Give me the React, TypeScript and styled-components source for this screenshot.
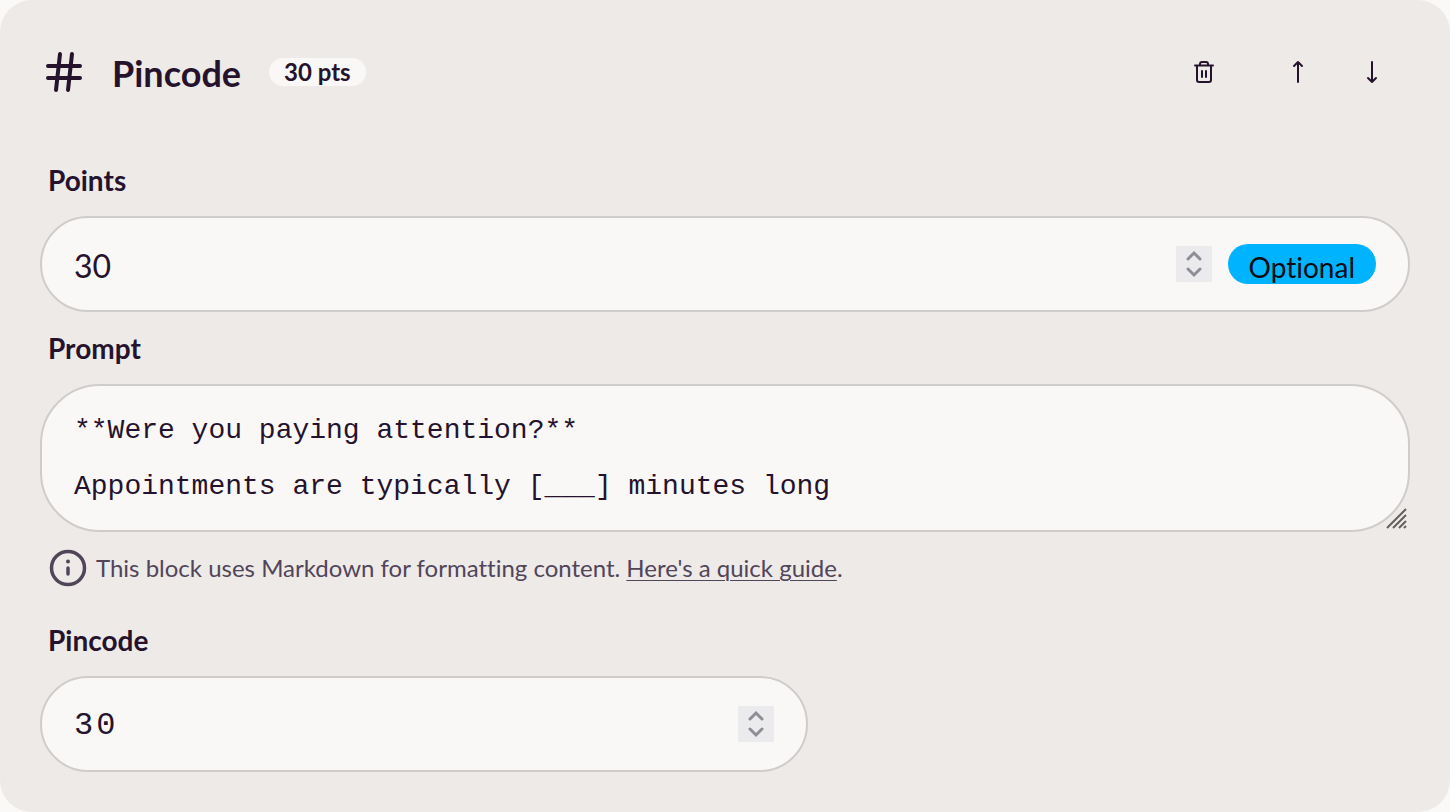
import React, { useState } from "react";
import styled, { createGlobalStyle } from "styled-components";

const ink = "#25132e";
const sans = 'Lato, "Noto Sans", sans-serif';
const mono = '"Liberation Mono", "Courier New", monospace';

const GlobalStyle = createGlobalStyle`
  *, *::before, *::after { box-sizing: border-box; }
  body {
    margin: 0;
    background: #faf9f7;
    color: ${ink};
    font-family: ${sans};
    font-variant-ligatures: none;
  }
  button, input, textarea { font: inherit; color: inherit; }
`;

const Card = styled.section`
  padding: 40px;
  border-radius: 32px;
  background: #eeeae7;
`;

const Header = styled.header`
  display: flex;
  align-items: center;
  height: 64px;
  margin-bottom: 40px;
`;

const HashIcon = styled.svg`
  flex: none;
  width: 48px;
  height: 48px;
  margin-right: 24px;
`;

const Title = styled.h2`
  margin: 0 28px 0 0;
  padding-top: 2px;
  font-size: 36px;
  font-weight: 700;
  line-height: 48px;
`;

const PointsBadge = styled.span`
  padding: 0 15px;
  border-radius: 14px;
  background: #faf8f7;
  font-size: 24px;
  font-weight: 700;
  line-height: 28px;
`;

const Actions = styled.div`
  display: flex;
  align-items: center;
  margin-left: auto;
  padding-right: 10px;
`;

const IconButton = styled.button<{ $gap?: number }>`
  display: flex;
  align-items: center;
  justify-content: center;
  width: 56px;
  height: 56px;
  margin: 0 0 0 ${(p) => p.$gap ?? 0}px;
  padding: 0;
  border: 0;
  border-radius: 28px;
  background: transparent;
  cursor: pointer;
`;

const Label = styled.label`
  display: block;
  padding: 16px 8px;
  font-size: 28px;
  font-weight: 700;
  line-height: 40px;
`;

const Field = styled.div<{ $narrow?: boolean }>`
  display: flex;
  align-items: center;
  gap: 16px;
  height: 96px;
  max-width: ${(p) => (p.$narrow ? "768px" : "none")};
  padding: 0 32px;
  border: 2px solid #d0cccb;
  border-radius: 48px;
  background: #faf8f7;
`;

const NumberInput = styled.input<{ $code?: boolean }>`
  flex: 1;
  min-width: 0;
  height: 52px;
  padding: 2px 0 0;
  border: 0;
  outline: 0;
  background: transparent;
  font-family: ${(p) => (p.$code ? mono : sans)};
  font-size: 32px;
  letter-spacing: ${(p) => (p.$code ? "3px" : "normal")};
  line-height: 48px;
  appearance: textfield;
  &::-webkit-inner-spin-button { display: none; }
`;

const Spinner = styled.div`
  display: flex;
  flex-direction: column;
  width: 36px;
  height: 36px;
  background: #ebebee;
`;

const Step = styled.button`
  display: flex;
  flex: 1;
  align-items: center;
  justify-content: center;
  padding: 0;
  border: 0;
  background: transparent;
`;

const OptionalTag = styled.span`
  height: 40px;
  padding: 0 21px;
  border-radius: 20px;
  background: #00b3ff;
  color: #0b0b12;
  font-size: 28px;
  line-height: 46px;
`;

const PromptBox = styled.div`
  position: relative;
  display: flex;
`;

const PromptArea = styled.textarea`
  width: 100%;
  height: 148px;
  padding: 31px 32px 29px;
  border: 2px solid #d0cccb;
  border-radius: 60px;
  outline: 0;
  background: #faf8f7;
  font-family: ${mono};
  font-size: 28px;
  line-height: 28px;
  resize: none;
  overflow: hidden;
`;

const Grip = styled.svg`
  position: absolute;
  right: 2px;
  bottom: 2px;
  width: 22px;
  height: 22px;
  pointer-events: none;
`;

const Help = styled.p`
  display: flex;
  align-items: center;
  gap: 8px;
  margin: 16px 0;
  padding: 0 8px;
  color: #51455a;
  font-size: 24px;
  line-height: 40px;
`;

const HelpLink = styled.a`
  color: inherit;
  text-decoration: underline;
  text-decoration-thickness: 1px;
  text-underline-offset: 3px;
`;

function Stepper({ onStep }: { onStep: (by: number) => void }) {
  return (
    <Spinner>
      <Step type="button" aria-label="Increase" onClick={() => onStep(1)}>
        <svg width="16" height="18" viewBox="0 0 16 18" fill="none" stroke="#8f8d96" strokeWidth="3">
          <path d="M2 13 8 7l6 6" strokeLinecap="round" />
        </svg>
      </Step>
      <Step type="button" aria-label="Decrease" onClick={() => onStep(-1)}>
        <svg width="16" height="18" viewBox="0 0 16 18" fill="none" stroke="#8f8d96" strokeWidth="3">
          <path d="M2 5l6 6 6-6" strokeLinecap="round" />
        </svg>
      </Step>
    </Spinner>
  );
}

export default function App() {
  const [points, setPoints] = useState("30");
  const [pin, setPin] = useState("30");
  const [prompt, setPrompt] = useState(
    "**Were you paying attention?**\n\nAppointments are typically [___] minutes long",
  );
  const bump = (value: string, by: number) => String((Number(value) || 0) + by);

  return (
    <>
      <GlobalStyle />
      <Card>
        <Header>
          <HashIcon viewBox="0 0 48 48" fill="none" stroke={ink} strokeWidth="4" strokeLinecap="round" aria-hidden>
            <path d="M8 18h32M8 30h32M20 6l-4 36M32 6l-4 36" />
          </HashIcon>
          <Title>Pincode</Title>
          <PointsBadge>{points} pts</PointsBadge>
          <Actions>
            <IconButton type="button" aria-label="Delete block">
              <svg width="24" height="24" viewBox="0 0 24 24" fill="none" stroke={ink} strokeWidth="2" strokeLinecap="round" strokeLinejoin="round">
                <path d="M3 5.500h18M5 5.500V20a2 2 0 0 0 2 2h10a2 2 0 0 0 2-2V5.500M8 5V4a2 2 0 0 1 2-2h4a2 2 0 0 1 2 2v1M10 11v6M14 11v6" />
              </svg>
            </IconButton>
            <IconButton type="button" aria-label="Move up" $gap={38}>
              <svg width="24" height="24" viewBox="0 0 24 24" fill="none" stroke={ink} strokeWidth="2" strokeLinecap="round" strokeLinejoin="round">
                <path d="M12 22V2M8 6l4-4 4 4" />
              </svg>
            </IconButton>
            <IconButton type="button" aria-label="Move down" $gap={18}>
              <svg width="24" height="24" viewBox="0 0 24 24" fill="none" stroke={ink} strokeWidth="2" strokeLinecap="round" strokeLinejoin="round">
                <path d="M12 2v20M8 18l4 4 4-4" />
              </svg>
            </IconButton>
          </Actions>
        </Header>

        <Label htmlFor="points">Points</Label>
        <Field>
          <NumberInput id="points" type="number" value={points} onChange={(e) => setPoints(e.target.value)} />
          <Stepper onStep={(by) => setPoints(bump(points, by))} />
          <OptionalTag>Optional</OptionalTag>
        </Field>

        <Label htmlFor="prompt">Prompt</Label>
        <PromptBox>
          <PromptArea id="prompt" value={prompt} onChange={(e) => setPrompt(e.target.value)} />
          <Grip viewBox="0 0 22 22" fill="none" stroke="#62605f" strokeWidth="2" aria-hidden>
            <path d="M1 20 20 1M7 20 20 7M13 20l7-7M18 20l2-2" />
          </Grip>
        </PromptBox>
        <Help>
          <svg width="40" height="40" viewBox="0 0 40 40" fill="none" stroke="#51455a" strokeWidth="3.500" strokeLinecap="round" aria-hidden>
            <circle cx="20" cy="20" r="16.500" />
            <path d="M20 20v6" />
            <circle cx="20" cy="13.500" r="2" fill="#51455a" stroke="none" />
          </svg>
          <span>
            This block uses Markdown for formatting content. <HelpLink href="#guide">Here's a quick guide</HelpLink>.
          </span>
        </Help>

        <Label htmlFor="pincode">Pincode</Label>
        <Field $narrow>
          <NumberInput id="pincode" type="number" $code value={pin} onChange={(e) => setPin(e.target.value)} />
          <Stepper onStep={(by) => setPin(bump(pin, by))} />
        </Field>
      </Card>
    </>
  );
}
